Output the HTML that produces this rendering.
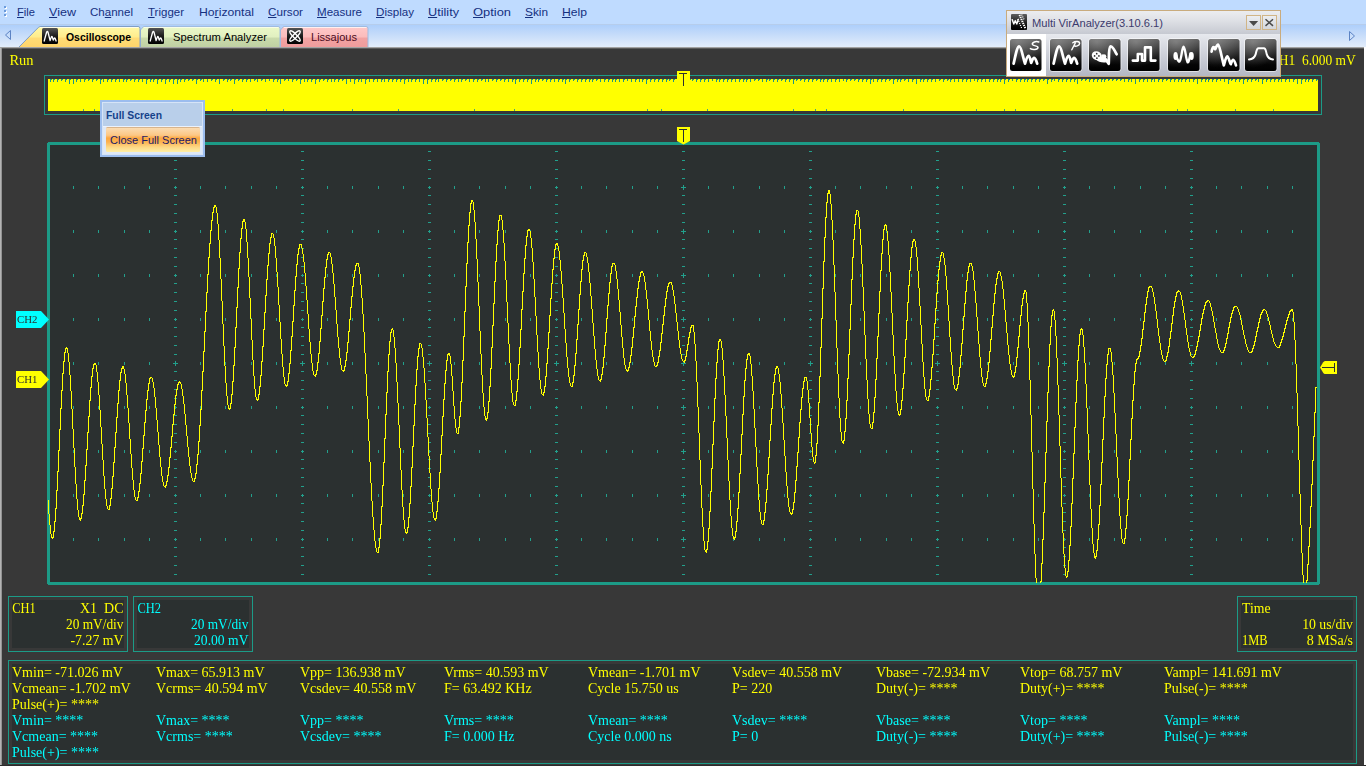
<!DOCTYPE html><html lang="en"><head><meta charset="utf-8"><title>Multi VirAnalyzer - Oscilloscope</title>
<style>

html,body{margin:0;padding:0}
body{width:1366px;height:768px;overflow:hidden;position:relative;background:#383838;font-family:"Liberation Sans",Arial,sans-serif;font-size:11.2px}
.abs{position:absolute}
#menubar{left:0;top:0;width:1366px;height:25px;background:#bfdbff;box-sizing:border-box;border-bottom:1px solid #b6cdec}
#menubar span{position:absolute;top:5px;color:#15307f;white-space:pre;line-height:15px;transform-origin:0 0}
#menubar u{text-decoration:underline;text-underline-offset:1px}
#grip{left:4px;top:6px;width:3px;height:11px}
#tabbar{left:0;top:25px;width:1366px;height:22px;background:linear-gradient(#aecffb,#c6dcfa 45%,#e3edfb)}
#work{left:0;top:47px;width:1366px;height:721px;background:#383838}
#edgeL{left:0;top:48px;width:2px;height:718px;background:linear-gradient(90deg,#b4b4b4 0 1px,#939393 1px)}
#edgeR{left:1364px;top:47px;width:2px;height:721px;background:#fff}
#edgeB{left:0;top:765px;width:1366px;height:3px;background:linear-gradient(#2c2c2c 0 1px,#fff 1px)}
#edgeT{left:0;top:47px;width:1366px;height:2px;background:linear-gradient(#a2a2a2 0 1px,#5c5c5c 1px)}
.tab{position:absolute;top:27px;height:20px;box-sizing:border-box}
.tab b,.tab i{position:absolute;top:3px;font-style:normal;white-space:pre;line-height:15px;transform-origin:0 0}
.ico16{position:absolute;top:1px;width:16px;height:16px}
.box{position:absolute;box-sizing:border-box;border:1px solid #1c9b87;background:#383838}
.box>div{position:absolute;left:3px;top:3px;right:3px;bottom:3px;background:#2b3030}
#popup{left:100px;top:100px;width:105px;height:57px;box-sizing:border-box;border:2px solid #9cbdee;background:#b9cfea;box-shadow:inset 0 0 0 1px #d6e4f7}
#popup b{position:absolute;left:3.5px;top:5.5px;color:#15428b;line-height:15px;white-space:pre;transform-origin:0 0}
#popsep{position:absolute;left:1px;right:1px;top:24px;height:1px;background:#ecf2fb}
#poplow{position:absolute;left:1px;right:1px;top:25px;bottom:1px;background:#dee8f6}
#popbtn{position:absolute;left:4px;top:25px;width:94px;height:25px;box-sizing:border-box;border-top:1px solid #d8b48c;border-radius:1.5px;background:linear-gradient(#fbdcb2,#fcc785 30%,#fda840 42%,#fdb14f 58%,#fdd885 80%,#feeea6)}
#popbtn span{position:absolute;left:3.5px;top:4.5px;color:#1c1a66;line-height:15px;white-space:pre;transform-origin:0 0}
#tool{left:1006px;top:10px;width:275px;height:67px;box-sizing:border-box;border:1px solid #c9ab7d;background:linear-gradient(#e9ebef,#cfd2da 22px,#e7e9ee 23px,#b3b7c3)}
#tooltitle{position:absolute;left:0;top:0;width:273px;height:23px;background:linear-gradient(#ecedf0,#dfe1e6 40%,#c6c9d1)}
#tooltitle span{position:absolute;left:25px;top:4.5px;color:#3b3a6c;line-height:15px;white-space:pre;transform-origin:0 0}
#sel{position:absolute;left:0;top:23px;width:39px;height:42px;background:#fff}
.tbtn{position:absolute;top:28px;width:32px;height:32px}
.cap{position:absolute;top:4px;width:15px;height:15px;box-sizing:border-box;border:1px solid #d1b587;background:linear-gradient(#eceef1,#d3d6dc)}

</style></head><body>
<div id="menubar" class="abs">
<span  style="transform:scaleX(0.9974);left:17px"><u>F</u>ile</span>
<span  style="transform:scaleX(1.1221);left:49px"><u>V</u>iew</span>
<span  style="transform:scaleX(1.0311);left:90px">Ch<u>a</u>nnel</span>
<span  style="transform:scaleX(1.0277);left:148px"><u>T</u>rigger</span>
<span  style="transform:scaleX(1.0915);left:199px">Ho<u>r</u>izontal</span>
<span  style="transform:scaleX(1.0419);left:268px"><u>C</u>ursor</span>
<span  style="transform:scaleX(1.0334);left:317px"><u>M</u>easure</span>
<span  style="transform:scaleX(1.0353);left:376px"><u>D</u>isplay</span>
<span  style="transform:scaleX(1.1324);left:428px"><u>U</u>tility</span>
<span  style="transform:scaleX(1.1526);left:473px"><u>O</u>ption</span>
<span  style="transform:scaleX(1.0560);left:525px"><u>S</u>kin</span>
<span  style="transform:scaleX(1.0855);left:562px"><u>H</u>elp</span>
</div><svg id="grip" class="abs" width="3" height="11" viewBox="0 0 3 11" shape-rendering="crispEdges"><path d="M1 1h2v2h-2zM1 5h2v2h-2zM1 9h2v2h-2z" fill="#fff"/><path d="M0 0h2v2h-2zM0 4h2v2h-2zM0 8h2v2h-2z" fill="#6b9bdc"/></svg>
<div id="tabbar" class="abs"></div>
<svg class="abs" style="left:0;top:25px" width="1366" height="22" viewBox="0 25 1366 22">
<defs><linearGradient id="gy" x1="0" y1="0" x2="0" y2="1"><stop offset="0" stop-color="#fff9a8"/><stop offset=".5" stop-color="#ffec8c"/><stop offset=".55" stop-color="#ffdc76"/><stop offset="1" stop-color="#ffd46a"/></linearGradient><linearGradient id="gg" x1="0" y1="0" x2="0" y2="1"><stop offset="0" stop-color="#ecf9c8"/><stop offset=".5" stop-color="#e1f0c0"/><stop offset=".55" stop-color="#cadbab"/><stop offset="1" stop-color="#bfd0a3"/></linearGradient><linearGradient id="gp" x1="0" y1="0" x2="0" y2="1"><stop offset="0" stop-color="#ffc9c9"/><stop offset=".5" stop-color="#fbbcbc"/><stop offset=".55" stop-color="#f2a3a3"/><stop offset="1" stop-color="#ef9c9c"/></linearGradient><linearGradient id="gk" x1="0" y1="0" x2="0" y2="1"><stop offset="0" stop-color="#555"/><stop offset=".5" stop-color="#1c1c1c"/><stop offset="1" stop-color="#000"/></linearGradient></defs>
<path d="M280.5 47.5V30l3-3.5H366q2 0 2 2V47.5z" fill="url(#gp)" stroke="#9fbbe0" stroke-width="1"/><path d="M284 27.5H366.5" stroke="#fff0f0" stroke-width="1" fill="none"/>
<path d="M140.5 47.5V30l3-3.5H278q2 0 2 2V47.5z" fill="url(#gg)" stroke="#9fbbe0" stroke-width="1"/><path d="M144 27.5H278.5" stroke="#f8fde8" stroke-width="1" fill="none"/>
<path d="M18.5 47.5L38.5 27.3q1-.8 2.5-.8H138q2 0 2 2V47.5z" fill="url(#gy)" stroke="#7f9ec6" stroke-width="1"/>
<path d="M40 27.5H138.5" stroke="#fffde8" stroke-width="1" fill="none"/>
<path d="M10.5 30.5v9l-5-4.5z" fill="none" stroke="#5c83c4" stroke-width="1"/>
<path d="M1349.5 31.5v9l5-4.5z" fill="none" stroke="#5c83c4" stroke-width="1"/>
<rect x="42" y="28" width="16" height="16" rx="1.5" fill="url(#gk)"/>
<path d="M44.2 41l2.3-8.5q.9-2 1.6 0l2 8 1.3-3.6q.5-1 .9 0l.9 3.2 1-1.9q.5-.8 .9 0l1 2.8" fill="none" stroke="#fff" stroke-width="1.3" stroke-linecap="round" stroke-linejoin="round"/>
<rect x="148" y="28" width="16" height="16" rx="1.5" fill="url(#gk)"/>
<path d="M150.2 41l2.3-8.5q.9-2 1.6 0l2 8 1.3-3.6q.5-1 .9 0l.9 3.2 1-1.9q.5-.8 .9 0l1 2.8" fill="none" stroke="#fff" stroke-width="1.3" stroke-linecap="round" stroke-linejoin="round"/>
<rect x="287" y="28" width="16" height="16" rx="1.5" fill="url(#gk)"/>
<g fill="none" stroke="#fff" stroke-width="1.5"><ellipse cx="295" cy="36" rx="7" ry="1.9" transform="rotate(45 295 36)"/><ellipse cx="295" cy="36" rx="7" ry="1.9" transform="rotate(-45 295 36)"/></g>
</svg>
<div class="abs" style="left:0;top:25px;width:1366px;height:22px">
<b class="abs" style="transform:scaleX(0.9334);left:66px;top:5px;color:#000;line-height:15px;white-space:pre;transform-origin:0 0">Oscilloscope</b>
<span class="abs" style="transform:scaleX(1.0010);left:173px;top:5px;color:#000;line-height:15px;white-space:pre;transform-origin:0 0">Spectrum Analyzer</span>
<span class="abs" style="transform:scaleX(0.9863);left:311px;top:5px;color:#4a0a1c;line-height:15px;white-space:pre;transform-origin:0 0">Lissajous</span>
</div>
<div id="work" class="abs"></div><div id="edgeT" class="abs"></div>
<div class="box" style="left:8px;top:596px;width:120px;height:56px"><div></div></div>
<div class="box" style="left:133px;top:596px;width:120px;height:56px"><div></div></div>
<div class="box" style="left:1237px;top:596px;width:120px;height:56px"><div></div></div>
<div class="box" style="left:8px;top:660px;width:1349px;height:104px"><div></div></div>
<svg class="abs" style="left:0;top:47px;will-change:transform" width="1366" height="721" viewBox="0 47 1366 721" shape-rendering="crispEdges">
<rect x="44.5" y="75.5" width="1277" height="39" fill="#363839" stroke="#1c9b87" stroke-width="1"/>
<rect x="48" y="79" width="1270" height="32" fill="#ffff00"/>
<path d="M50.5 79v3M51.5 79v1M53.5 79v3M54.5 79v1M57.5 79v3M58.5 79v1M61.5 79v2M62.5 79v1M65.5 79v3M66.5 79v1M69.5 79v5M70.5 79v1M73.5 79v5M76.5 79v3M77.5 79v1M80.5 79v3M84.5 79v3M85.5 79v1M88.5 79v2M89.5 79v1M92.5 79v3M93.5 79v1M96.5 79v2M97.5 79v1M100.5 79v5M101.5 79v1M103.5 79v3M107.5 79v3M108.5 79v1M111.5 79v3M112.5 79v1M115.5 79v3M116.5 79v1M119.5 79v3M123.5 79v3M124.5 79v1M126.5 79v3M127.5 79v1M130.5 79v2M131.5 79v1M134.5 79v3M135.5 79v1M138.5 79v3M139.5 79v1M142.5 79v3M146.5 79v5M147.5 79v1M150.5 79v3M151.5 79v1M153.5 79v3M154.5 79v1M157.5 79v5M158.5 79v1M161.5 79v3M162.5 79v1M165.5 79v5M166.5 79v1M169.5 79v3M170.5 79v1M173.5 79v5M174.5 79v1M177.5 79v5M178.5 79v1M180.5 79v3M181.5 79v1M184.5 79v3M185.5 79v1M188.5 79v2M189.5 79v1M192.5 79v2M193.5 79v1M196.5 79v5M197.5 79v1M200.5 79v2M201.5 79v1M203.5 79v3M207.5 79v3M211.5 79v2M212.5 79v1M215.5 79v3M216.5 79v1M219.5 79v5M223.5 79v2M224.5 79v1M227.5 79v3M228.5 79v1M230.5 79v2M231.5 79v1M234.5 79v5M235.5 79v1M238.5 79v2M239.5 79v1M242.5 79v3M243.5 79v1M246.5 79v3M247.5 79v1M250.5 79v3M254.5 79v2M255.5 79v1M257.5 79v3M261.5 79v2M262.5 79v1M265.5 79v3M269.5 79v2M273.5 79v3M274.5 79v1M277.5 79v3M278.5 79v1M280.5 79v5M284.5 79v2M285.5 79v1M288.5 79v2M292.5 79v3M293.5 79v1M296.5 79v2M297.5 79v1M300.5 79v5M301.5 79v1M304.5 79v3M307.5 79v3M308.5 79v1M311.5 79v3M312.5 79v1M315.5 79v5M316.5 79v1M319.5 79v3M320.5 79v1M323.5 79v2M324.5 79v1M327.5 79v3M328.5 79v1M331.5 79v3M334.5 79v3M335.5 79v1M338.5 79v3M339.5 79v1M342.5 79v2M343.5 79v1M346.5 79v5M350.5 79v3M354.5 79v5M355.5 79v1M358.5 79v3M359.5 79v1M361.5 79v3M365.5 79v5M366.5 79v1M369.5 79v3M373.5 79v3M374.5 79v1M377.5 79v3M381.5 79v3M382.5 79v1M384.5 79v3M388.5 79v3M389.5 79v1M392.5 79v3M393.5 79v1M396.5 79v3M397.5 79v1M400.5 79v3M401.5 79v1M404.5 79v5M405.5 79v1M408.5 79v3M411.5 79v3M412.5 79v1M415.5 79v3M416.5 79v1M419.5 79v3M423.5 79v5M424.5 79v1M427.5 79v5M428.5 79v1M431.5 79v3M432.5 79v1M435.5 79v3M436.5 79v1M438.5 79v3M442.5 79v2M443.5 79v1M446.5 79v3M447.5 79v1M450.5 79v2M451.5 79v1M454.5 79v3M455.5 79v1M458.5 79v3M461.5 79v3M462.5 79v1M465.5 79v2M466.5 79v1M469.5 79v3M473.5 79v3M474.5 79v1M477.5 79v3M478.5 79v1M481.5 79v2M482.5 79v1M485.5 79v3M488.5 79v3M492.5 79v2M493.5 79v1M496.5 79v3M497.5 79v1M500.5 79v2M501.5 79v1M504.5 79v3M505.5 79v1M508.5 79v3M512.5 79v3M513.5 79v1M515.5 79v5M516.5 79v1M519.5 79v3M520.5 79v1M523.5 79v3M524.5 79v1M527.5 79v3M528.5 79v1M531.5 79v5M532.5 79v1M535.5 79v3M536.5 79v1M538.5 79v3M539.5 79v1M542.5 79v2M543.5 79v1M546.5 79v3M547.5 79v1M550.5 79v3M551.5 79v1M554.5 79v3M558.5 79v3M559.5 79v1M562.5 79v3M563.5 79v1M565.5 79v5M566.5 79v1M569.5 79v3M570.5 79v1M573.5 79v2M574.5 79v1M577.5 79v3M578.5 79v1M581.5 79v3M582.5 79v1M585.5 79v3M586.5 79v1M589.5 79v3M590.5 79v1M592.5 79v3M593.5 79v1M596.5 79v2M597.5 79v1M600.5 79v3M604.5 79v3M605.5 79v1M608.5 79v3M609.5 79v1M612.5 79v3M613.5 79v1M615.5 79v3M616.5 79v1M619.5 79v3M623.5 79v3M624.5 79v1M627.5 79v2M631.5 79v3M635.5 79v3M636.5 79v1M639.5 79v3M642.5 79v3M643.5 79v1M646.5 79v5M647.5 79v1M650.5 79v3M651.5 79v1M654.5 79v3M655.5 79v1M658.5 79v3M659.5 79v1M662.5 79v3M663.5 79v1M666.5 79v3M667.5 79v1M669.5 79v2M670.5 79v1M673.5 79v3M674.5 79v1M677.5 79v3M678.5 79v1M681.5 79v3M682.5 79v1M685.5 79v3M686.5 79v1M689.5 79v2M690.5 79v1M692.5 79v2M693.5 79v1M696.5 79v3M697.5 79v1M700.5 79v3M701.5 79v1M704.5 79v3M705.5 79v1M708.5 79v3M712.5 79v2M716.5 79v3M717.5 79v1M719.5 79v3M720.5 79v1M723.5 79v3M724.5 79v1M727.5 79v3M728.5 79v1M731.5 79v3M732.5 79v1M735.5 79v3M739.5 79v3M740.5 79v1M743.5 79v3M744.5 79v1M746.5 79v3M747.5 79v1M750.5 79v3M754.5 79v2M755.5 79v1M758.5 79v2M759.5 79v1M762.5 79v3M766.5 79v3M767.5 79v1M769.5 79v2M770.5 79v1M773.5 79v3M774.5 79v1M777.5 79v3M778.5 79v1M781.5 79v2M782.5 79v1M785.5 79v3M786.5 79v1M789.5 79v3M790.5 79v1M793.5 79v5M794.5 79v1M796.5 79v2M797.5 79v1M800.5 79v2M801.5 79v1M804.5 79v3M805.5 79v1M808.5 79v3M809.5 79v1M812.5 79v3M813.5 79v1M816.5 79v2M817.5 79v1M820.5 79v3M821.5 79v1M823.5 79v3M824.5 79v1M827.5 79v3M828.5 79v1M831.5 79v3M835.5 79v3M836.5 79v1M839.5 79v3M843.5 79v2M846.5 79v3M847.5 79v1M850.5 79v2M851.5 79v1M854.5 79v2M855.5 79v1M858.5 79v3M859.5 79v1M862.5 79v3M863.5 79v1M866.5 79v3M867.5 79v1M870.5 79v5M871.5 79v1M873.5 79v3M877.5 79v3M878.5 79v1M881.5 79v3M882.5 79v1M885.5 79v3M886.5 79v1M889.5 79v2M890.5 79v1M893.5 79v5M894.5 79v1M897.5 79v3M898.5 79v1M900.5 79v3M901.5 79v1M904.5 79v2M905.5 79v1M908.5 79v3M912.5 79v3M913.5 79v1M916.5 79v5M920.5 79v3M921.5 79v1M923.5 79v3M924.5 79v1M927.5 79v3M928.5 79v1M931.5 79v3M932.5 79v1M935.5 79v3M939.5 79v2M940.5 79v1M943.5 79v3M944.5 79v1M947.5 79v2M948.5 79v1M950.5 79v3M951.5 79v1M954.5 79v3M958.5 79v3M962.5 79v3M963.5 79v1M966.5 79v3M967.5 79v1M970.5 79v3M974.5 79v2M977.5 79v3M978.5 79v1M981.5 79v3M982.5 79v1M985.5 79v3M989.5 79v3M990.5 79v1M993.5 79v3M994.5 79v1M997.5 79v3M998.5 79v1M1000.5 79v3M1001.5 79v1M1004.5 79v5M1005.5 79v1M1008.5 79v3M1009.5 79v1M1012.5 79v2M1016.5 79v3M1017.5 79v1M1020.5 79v3M1021.5 79v1M1024.5 79v3M1025.5 79v1M1027.5 79v3M1028.5 79v1M1031.5 79v3M1032.5 79v1M1035.5 79v3M1036.5 79v1M1039.5 79v3M1040.5 79v1M1043.5 79v2M1044.5 79v1M1047.5 79v5M1048.5 79v1M1051.5 79v3M1052.5 79v1M1054.5 79v2M1058.5 79v3M1059.5 79v1M1062.5 79v3M1063.5 79v1M1066.5 79v3M1067.5 79v1M1070.5 79v3M1071.5 79v1M1074.5 79v3M1075.5 79v1M1077.5 79v5M1081.5 79v2M1082.5 79v1M1085.5 79v2M1086.5 79v1M1089.5 79v3M1090.5 79v1M1093.5 79v3M1094.5 79v1M1097.5 79v3M1098.5 79v1M1101.5 79v3M1102.5 79v1M1104.5 79v3M1105.5 79v1M1108.5 79v2M1109.5 79v1M1112.5 79v2M1113.5 79v1M1116.5 79v2M1117.5 79v1M1120.5 79v2M1121.5 79v1M1124.5 79v3M1128.5 79v3M1129.5 79v1M1131.5 79v3M1135.5 79v5M1139.5 79v3M1140.5 79v1M1143.5 79v3M1144.5 79v1M1147.5 79v3M1151.5 79v3M1152.5 79v1M1154.5 79v3M1158.5 79v3M1159.5 79v1M1162.5 79v3M1163.5 79v1M1166.5 79v2M1167.5 79v1M1170.5 79v3M1171.5 79v1M1174.5 79v3M1175.5 79v1M1178.5 79v3M1179.5 79v1M1181.5 79v3M1182.5 79v1M1185.5 79v3M1186.5 79v1M1189.5 79v3M1193.5 79v3M1194.5 79v1M1197.5 79v5M1201.5 79v3M1202.5 79v1M1205.5 79v3M1206.5 79v1M1208.5 79v3M1209.5 79v1M1212.5 79v3M1213.5 79v1M1216.5 79v3M1217.5 79v1M1220.5 79v2M1224.5 79v3M1228.5 79v5M1229.5 79v1M1231.5 79v2M1232.5 79v1M1235.5 79v3M1236.5 79v1M1239.5 79v3M1240.5 79v1M1243.5 79v5M1244.5 79v1M1247.5 79v3M1248.5 79v1M1251.5 79v3M1252.5 79v1M1255.5 79v2M1256.5 79v1M1258.5 79v3M1262.5 79v5M1263.5 79v1M1266.5 79v3M1267.5 79v1M1270.5 79v3M1271.5 79v1M1274.5 79v3M1275.5 79v1M1278.5 79v3M1279.5 79v1M1281.5 79v3M1285.5 79v3M1286.5 79v1M1289.5 79v3M1293.5 79v3M1294.5 79v1M1297.5 79v5M1301.5 79v5M1302.5 79v1M1305.5 79v3M1306.5 79v1M1308.5 79v3M1309.5 79v1M1312.5 79v3M1313.5 79v1M1316.5 79v2M1317.5 79v1" stroke="#1f9484" stroke-width="1" fill="none"/>
<path d="M83.5 109v2M94.5 109v2M232.5 109v2M266.5 109v2M283.5 109v2M352.5 109v2M398.5 109v2M474.5 109v2M514.5 109v2M647.5 109v2M661.5 109v2M707.5 109v2M793.5 109v2M815.5 109v2M826.5 109v2M903.5 109v2M976.5 109v2M1004.5 109v2M1015.5 109v2M1102.5 109v2M1177.5 109v2M1187.5 109v2M1235.5 109v2M1273.5 109v2" stroke="#45a37c" stroke-width="1" fill="none"/>
<rect x="677" y="71" width="13" height="12" fill="#ffff00"/>
<path d="M679 73.5h8M683.5 73v13" stroke="#2b3030" stroke-width="1" fill="none"/>
<rect x="48.5" y="143.5" width="1270" height="440" rx="1.5" fill="#2b3030" stroke="#1c9b87" stroke-width="3"/>
<path d="M174 151.5h3M174 160.5h3M174 169.5h3M174 178.5h3M174 187.5h3M175.5 186v3M174 195.5h3M174 204.5h3M174 213.5h3M174 222.5h3M174 231.5h3M175.5 230v3M174 239.5h3M174 248.5h3M174 257.5h3M174 266.5h3M174 275.5h3M175.5 274v3M174 283.5h3M174 292.5h3M174 301.5h3M174 310.5h3M174 319.5h3M175.5 318v3M174 327.5h3M174 336.5h3M174 345.5h3M174 354.5h3M173 363.5h5M175.5 361v5M174 371.5h3M174 380.5h3M174 389.5h3M174 398.5h3M174 407.5h3M175.5 406v3M174 415.5h3M174 424.5h3M174 433.5h3M174 442.5h3M174 451.5h3M175.5 450v3M174 459.5h3M174 468.5h3M174 477.5h3M174 486.5h3M174 495.5h3M175.5 494v3M174 503.5h3M174 512.5h3M174 521.5h3M174 530.5h3M174 539.5h3M175.5 538v3M174 547.5h3M174 556.5h3M174 565.5h3M174 574.5h3M301 151.5h3M301 160.5h3M301 169.5h3M301 178.5h3M301 187.5h3M302.5 186v3M301 195.5h3M301 204.5h3M301 213.5h3M301 222.5h3M301 231.5h3M302.5 230v3M301 239.5h3M301 248.5h3M301 257.5h3M301 266.5h3M301 275.5h3M302.5 274v3M301 283.5h3M301 292.5h3M301 301.5h3M301 310.5h3M301 319.5h3M302.5 318v3M301 327.5h3M301 336.5h3M301 345.5h3M301 354.5h3M300 363.5h5M302.5 361v5M301 371.5h3M301 380.5h3M301 389.5h3M301 398.5h3M301 407.5h3M302.5 406v3M301 415.5h3M301 424.5h3M301 433.5h3M301 442.5h3M301 451.5h3M302.5 450v3M301 459.5h3M301 468.5h3M301 477.5h3M301 486.5h3M301 495.5h3M302.5 494v3M301 503.5h3M301 512.5h3M301 521.5h3M301 530.5h3M301 539.5h3M302.5 538v3M301 547.5h3M301 556.5h3M301 565.5h3M301 574.5h3M428 151.5h3M428 160.5h3M428 169.5h3M428 178.5h3M428 187.5h3M429.5 186v3M428 195.5h3M428 204.5h3M428 213.5h3M428 222.5h3M428 231.5h3M429.5 230v3M428 239.5h3M428 248.5h3M428 257.5h3M428 266.5h3M428 275.5h3M429.5 274v3M428 283.5h3M428 292.5h3M428 301.5h3M428 310.5h3M428 319.5h3M429.5 318v3M428 327.5h3M428 336.5h3M428 345.5h3M428 354.5h3M427 363.5h5M429.5 361v5M428 371.5h3M428 380.5h3M428 389.5h3M428 398.5h3M428 407.5h3M429.5 406v3M428 415.5h3M428 424.5h3M428 433.5h3M428 442.5h3M428 451.5h3M429.5 450v3M428 459.5h3M428 468.5h3M428 477.5h3M428 486.5h3M428 495.5h3M429.5 494v3M428 503.5h3M428 512.5h3M428 521.5h3M428 530.5h3M428 539.5h3M429.5 538v3M428 547.5h3M428 556.5h3M428 565.5h3M428 574.5h3M555 151.5h3M555 160.5h3M555 169.5h3M555 178.5h3M555 187.5h3M556.5 186v3M555 195.5h3M555 204.5h3M555 213.5h3M555 222.5h3M555 231.5h3M556.5 230v3M555 239.5h3M555 248.5h3M555 257.5h3M555 266.5h3M555 275.5h3M556.5 274v3M555 283.5h3M555 292.5h3M555 301.5h3M555 310.5h3M555 319.5h3M556.5 318v3M555 327.5h3M555 336.5h3M555 345.5h3M555 354.5h3M554 363.5h5M556.5 361v5M555 371.5h3M555 380.5h3M555 389.5h3M555 398.5h3M555 407.5h3M556.5 406v3M555 415.5h3M555 424.5h3M555 433.5h3M555 442.5h3M555 451.5h3M556.5 450v3M555 459.5h3M555 468.5h3M555 477.5h3M555 486.5h3M555 495.5h3M556.5 494v3M555 503.5h3M555 512.5h3M555 521.5h3M555 530.5h3M555 539.5h3M556.5 538v3M555 547.5h3M555 556.5h3M555 565.5h3M555 574.5h3M682 151.5h3M682 160.5h3M682 169.5h3M682 178.5h3M681 187.5h5M683.5 185v5M682 195.5h3M682 204.5h3M682 213.5h3M682 222.5h3M681 231.5h5M683.5 229v5M682 239.5h3M682 248.5h3M682 257.5h3M682 266.5h3M681 275.5h5M683.5 273v5M682 283.5h3M682 292.5h3M682 301.5h3M682 310.5h3M681 319.5h5M683.5 317v5M682 327.5h3M682 336.5h3M682 345.5h3M682 354.5h3M681 363.5h5M683.5 361v5M682 371.5h3M682 380.5h3M682 389.5h3M682 398.5h3M681 407.5h5M683.5 405v5M682 415.5h3M682 424.5h3M682 433.5h3M682 442.5h3M681 451.5h5M683.5 449v5M682 459.5h3M682 468.5h3M682 477.5h3M682 486.5h3M681 495.5h5M683.5 493v5M682 503.5h3M682 512.5h3M682 521.5h3M682 530.5h3M681 539.5h5M683.5 537v5M682 547.5h3M682 556.5h3M682 565.5h3M682 574.5h3M809 151.5h3M809 160.5h3M809 169.5h3M809 178.5h3M809 187.5h3M810.5 186v3M809 195.5h3M809 204.5h3M809 213.5h3M809 222.5h3M809 231.5h3M810.5 230v3M809 239.5h3M809 248.5h3M809 257.5h3M809 266.5h3M809 275.5h3M810.5 274v3M809 283.5h3M809 292.5h3M809 301.5h3M809 310.5h3M809 319.5h3M810.5 318v3M809 327.5h3M809 336.5h3M809 345.5h3M809 354.5h3M808 363.5h5M810.5 361v5M809 371.5h3M809 380.5h3M809 389.5h3M809 398.5h3M809 407.5h3M810.5 406v3M809 415.5h3M809 424.5h3M809 433.5h3M809 442.5h3M809 451.5h3M810.5 450v3M809 459.5h3M809 468.5h3M809 477.5h3M809 486.5h3M809 495.5h3M810.5 494v3M809 503.5h3M809 512.5h3M809 521.5h3M809 530.5h3M809 539.5h3M810.5 538v3M809 547.5h3M809 556.5h3M809 565.5h3M809 574.5h3M936 151.5h3M936 160.5h3M936 169.5h3M936 178.5h3M936 187.5h3M937.5 186v3M936 195.5h3M936 204.5h3M936 213.5h3M936 222.5h3M936 231.5h3M937.5 230v3M936 239.5h3M936 248.5h3M936 257.5h3M936 266.5h3M936 275.5h3M937.5 274v3M936 283.5h3M936 292.5h3M936 301.5h3M936 310.5h3M936 319.5h3M937.5 318v3M936 327.5h3M936 336.5h3M936 345.5h3M936 354.5h3M935 363.5h5M937.5 361v5M936 371.5h3M936 380.5h3M936 389.5h3M936 398.5h3M936 407.5h3M937.5 406v3M936 415.5h3M936 424.5h3M936 433.5h3M936 442.5h3M936 451.5h3M937.5 450v3M936 459.5h3M936 468.5h3M936 477.5h3M936 486.5h3M936 495.5h3M937.5 494v3M936 503.5h3M936 512.5h3M936 521.5h3M936 530.5h3M936 539.5h3M937.5 538v3M936 547.5h3M936 556.5h3M936 565.5h3M936 574.5h3M1063 151.5h3M1063 160.5h3M1063 169.5h3M1063 178.5h3M1063 187.5h3M1064.5 186v3M1063 195.5h3M1063 204.5h3M1063 213.5h3M1063 222.5h3M1063 231.5h3M1064.5 230v3M1063 239.5h3M1063 248.5h3M1063 257.5h3M1063 266.5h3M1063 275.5h3M1064.5 274v3M1063 283.5h3M1063 292.5h3M1063 301.5h3M1063 310.5h3M1063 319.5h3M1064.5 318v3M1063 327.5h3M1063 336.5h3M1063 345.5h3M1063 354.5h3M1062 363.5h5M1064.5 361v5M1063 371.5h3M1063 380.5h3M1063 389.5h3M1063 398.5h3M1063 407.5h3M1064.5 406v3M1063 415.5h3M1063 424.5h3M1063 433.5h3M1063 442.5h3M1063 451.5h3M1064.5 450v3M1063 459.5h3M1063 468.5h3M1063 477.5h3M1063 486.5h3M1063 495.5h3M1064.5 494v3M1063 503.5h3M1063 512.5h3M1063 521.5h3M1063 530.5h3M1063 539.5h3M1064.5 538v3M1063 547.5h3M1063 556.5h3M1063 565.5h3M1063 574.5h3M1190 151.5h3M1190 160.5h3M1190 169.5h3M1190 178.5h3M1190 187.5h3M1191.5 186v3M1190 195.5h3M1190 204.5h3M1190 213.5h3M1190 222.5h3M1190 231.5h3M1191.5 230v3M1190 239.5h3M1190 248.5h3M1190 257.5h3M1190 266.5h3M1190 275.5h3M1191.5 274v3M1190 283.5h3M1190 292.5h3M1190 301.5h3M1190 310.5h3M1190 319.5h3M1191.5 318v3M1190 327.5h3M1190 336.5h3M1190 345.5h3M1190 354.5h3M1189 363.5h5M1191.5 361v5M1190 371.5h3M1190 380.5h3M1190 389.5h3M1190 398.5h3M1190 407.5h3M1191.5 406v3M1190 415.5h3M1190 424.5h3M1190 433.5h3M1190 442.5h3M1190 451.5h3M1191.5 450v3M1190 459.5h3M1190 468.5h3M1190 477.5h3M1190 486.5h3M1190 495.5h3M1191.5 494v3M1190 503.5h3M1190 512.5h3M1190 521.5h3M1190 530.5h3M1190 539.5h3M1191.5 538v3M1190 547.5h3M1190 556.5h3M1190 565.5h3M1190 574.5h3M73.5 186v3M98.5 186v3M124.5 186v3M149.5 186v3M200.5 186v3M225.5 186v3M251.5 186v3M276.5 186v3M327.5 186v3M352.5 186v3M378.5 186v3M403.5 186v3M454.5 186v3M479.5 186v3M505.5 186v3M530.5 186v3M581.5 186v3M606.5 186v3M632.5 186v3M657.5 186v3M708.5 186v3M733.5 186v3M759.5 186v3M784.5 186v3M835.5 186v3M860.5 186v3M886.5 186v3M911.5 186v3M962.5 186v3M987.5 186v3M1013.5 186v3M1038.5 186v3M1089.5 186v3M1114.5 186v3M1140.5 186v3M1165.5 186v3M1216.5 186v3M1241.5 186v3M1267.5 186v3M1292.5 186v3M73.5 230v3M98.5 230v3M124.5 230v3M149.5 230v3M200.5 230v3M225.5 230v3M251.5 230v3M276.5 230v3M327.5 230v3M352.5 230v3M378.5 230v3M403.5 230v3M454.5 230v3M479.5 230v3M505.5 230v3M530.5 230v3M581.5 230v3M606.5 230v3M632.5 230v3M657.5 230v3M708.5 230v3M733.5 230v3M759.5 230v3M784.5 230v3M835.5 230v3M860.5 230v3M886.5 230v3M911.5 230v3M962.5 230v3M987.5 230v3M1013.5 230v3M1038.5 230v3M1089.5 230v3M1114.5 230v3M1140.5 230v3M1165.5 230v3M1216.5 230v3M1241.5 230v3M1267.5 230v3M1292.5 230v3M73.5 274v3M98.5 274v3M124.5 274v3M149.5 274v3M200.5 274v3M225.5 274v3M251.5 274v3M276.5 274v3M327.5 274v3M352.5 274v3M378.5 274v3M403.5 274v3M454.5 274v3M479.5 274v3M505.5 274v3M530.5 274v3M581.5 274v3M606.5 274v3M632.5 274v3M657.5 274v3M708.5 274v3M733.5 274v3M759.5 274v3M784.5 274v3M835.5 274v3M860.5 274v3M886.5 274v3M911.5 274v3M962.5 274v3M987.5 274v3M1013.5 274v3M1038.5 274v3M1089.5 274v3M1114.5 274v3M1140.5 274v3M1165.5 274v3M1216.5 274v3M1241.5 274v3M1267.5 274v3M1292.5 274v3M73.5 318v3M98.5 318v3M124.5 318v3M149.5 318v3M200.5 318v3M225.5 318v3M251.5 318v3M276.5 318v3M327.5 318v3M352.5 318v3M378.5 318v3M403.5 318v3M454.5 318v3M479.5 318v3M505.5 318v3M530.5 318v3M581.5 318v3M606.5 318v3M632.5 318v3M657.5 318v3M708.5 318v3M733.5 318v3M759.5 318v3M784.5 318v3M835.5 318v3M860.5 318v3M886.5 318v3M911.5 318v3M962.5 318v3M987.5 318v3M1013.5 318v3M1038.5 318v3M1089.5 318v3M1114.5 318v3M1140.5 318v3M1165.5 318v3M1216.5 318v3M1241.5 318v3M1267.5 318v3M1292.5 318v3M73.5 362v3M98.5 362v3M124.5 362v3M149.5 362v3M200.5 362v3M225.5 362v3M251.5 362v3M276.5 362v3M327.5 362v3M352.5 362v3M378.5 362v3M403.5 362v3M454.5 362v3M479.5 362v3M505.5 362v3M530.5 362v3M581.5 362v3M606.5 362v3M632.5 362v3M657.5 362v3M708.5 362v3M733.5 362v3M759.5 362v3M784.5 362v3M835.5 362v3M860.5 362v3M886.5 362v3M911.5 362v3M962.5 362v3M987.5 362v3M1013.5 362v3M1038.5 362v3M1089.5 362v3M1114.5 362v3M1140.5 362v3M1165.5 362v3M1216.5 362v3M1241.5 362v3M1267.5 362v3M1292.5 362v3M73.5 406v3M98.5 406v3M124.5 406v3M149.5 406v3M200.5 406v3M225.5 406v3M251.5 406v3M276.5 406v3M327.5 406v3M352.5 406v3M378.5 406v3M403.5 406v3M454.5 406v3M479.5 406v3M505.5 406v3M530.5 406v3M581.5 406v3M606.5 406v3M632.5 406v3M657.5 406v3M708.5 406v3M733.5 406v3M759.5 406v3M784.5 406v3M835.5 406v3M860.5 406v3M886.5 406v3M911.5 406v3M962.5 406v3M987.5 406v3M1013.5 406v3M1038.5 406v3M1089.5 406v3M1114.5 406v3M1140.5 406v3M1165.5 406v3M1216.5 406v3M1241.5 406v3M1267.5 406v3M1292.5 406v3M73.5 450v3M98.5 450v3M124.5 450v3M149.5 450v3M200.5 450v3M225.5 450v3M251.5 450v3M276.5 450v3M327.5 450v3M352.5 450v3M378.5 450v3M403.5 450v3M454.5 450v3M479.5 450v3M505.5 450v3M530.5 450v3M581.5 450v3M606.5 450v3M632.5 450v3M657.5 450v3M708.5 450v3M733.5 450v3M759.5 450v3M784.5 450v3M835.5 450v3M860.5 450v3M886.5 450v3M911.5 450v3M962.5 450v3M987.5 450v3M1013.5 450v3M1038.5 450v3M1089.5 450v3M1114.5 450v3M1140.5 450v3M1165.5 450v3M1216.5 450v3M1241.5 450v3M1267.5 450v3M1292.5 450v3M73.5 494v3M98.5 494v3M124.5 494v3M149.5 494v3M200.5 494v3M225.5 494v3M251.5 494v3M276.5 494v3M327.5 494v3M352.5 494v3M378.5 494v3M403.5 494v3M454.5 494v3M479.5 494v3M505.5 494v3M530.5 494v3M581.5 494v3M606.5 494v3M632.5 494v3M657.5 494v3M708.5 494v3M733.5 494v3M759.5 494v3M784.5 494v3M835.5 494v3M860.5 494v3M886.5 494v3M911.5 494v3M962.5 494v3M987.5 494v3M1013.5 494v3M1038.5 494v3M1089.5 494v3M1114.5 494v3M1140.5 494v3M1165.5 494v3M1216.5 494v3M1241.5 494v3M1267.5 494v3M1292.5 494v3M73.5 538v3M98.5 538v3M124.5 538v3M149.5 538v3M200.5 538v3M225.5 538v3M251.5 538v3M276.5 538v3M327.5 538v3M352.5 538v3M378.5 538v3M403.5 538v3M454.5 538v3M479.5 538v3M505.5 538v3M530.5 538v3M581.5 538v3M606.5 538v3M632.5 538v3M657.5 538v3M708.5 538v3M733.5 538v3M759.5 538v3M784.5 538v3M835.5 538v3M860.5 538v3M886.5 538v3M911.5 538v3M962.5 538v3M987.5 538v3M1013.5 538v3M1038.5 538v3M1089.5 538v3M1114.5 538v3M1140.5 538v3M1165.5 538v3M1216.5 538v3M1241.5 538v3M1267.5 538v3M1292.5 538v3" stroke="#22a08c" stroke-width="1" fill="none"/>
<path d="M48.5 500V514M49.5 514V525M50.5 525V534M51.5 534V538M52.5 537V539M53.5 531V538M54.5 521V532M55.5 508V522M56.5 490V509M57.5 471V491M58.5 450V472M59.5 429V451M60.5 408V430M61.5 390V409M62.5 373V391M63.5 361V374M64.5 352V362M65.5 348V353M66.5 347V349M67.5 348V353M68.5 353V362M69.5 362V375M70.5 375V391M71.5 391V409M72.5 409V429M73.5 429V448M74.5 448V467M75.5 467V484M76.5 484V499M77.5 499V510M78.5 510V517M79.5 517V520M80.5 518V521M81.5 513V519M82.5 505V514M83.5 494V506M84.5 480V495M85.5 465V481M86.5 449V466M87.5 432V450M88.5 416V433M89.5 400V417M90.5 387V401M91.5 376V388M92.5 368V377M93.5 364V369M94.5 363V365M95.5 363V365M96.5 365V372M97.5 372V382M98.5 382V395M99.5 395V410M100.5 410V427M101.5 427V444M102.5 444V460M103.5 460V476M104.5 476V489M105.5 489V499M106.5 499V506M107.5 506V509M108.5 509V510M109.5 505V510M110.5 498V506M111.5 488V499M112.5 476V489M113.5 462V477M114.5 447V463M115.5 432V448M116.5 417V433M117.5 403V418M118.5 390V404M119.5 380V391M120.5 372V381M121.5 368V373M122.5 366V369M123.5 366V369M124.5 369V374M125.5 374V383M126.5 383V395M127.5 395V408M128.5 408V423M129.5 423V439M130.5 439V454M131.5 454V468M132.5 468V480M133.5 480V490M134.5 490V497M135.5 497V500M136.5 500V501M137.5 497V501M138.5 491V498M139.5 483V492M140.5 473V484M141.5 461V474M142.5 448V462M143.5 435V449M144.5 422V436M145.5 410V423M146.5 399V411M147.5 390V400M148.5 383V391M149.5 378V384M150.5 377V379M151.5 377V378M152.5 378V382M153.5 382V388M154.5 388V397M155.5 397V408M156.5 408V420M157.5 420V432M158.5 432V445M159.5 445V457M160.5 457V467M161.5 467V476M162.5 476V482M163.5 482V486M164.5 486V487M165.5 485V488M166.5 481V486M167.5 475V482M168.5 467V476M169.5 457V468M170.5 447V458M171.5 436V448M172.5 424V437M173.5 414V425M174.5 404V415M175.5 395V405M176.5 389V396M177.5 384V390M178.5 382V385M179.5 381V383M180.5 382V384M181.5 384V389M182.5 389V396M183.5 396V404M184.5 404V414M185.5 414V425M186.5 425V436M187.5 436V447M188.5 447V457M189.5 457V466M190.5 466V473M191.5 473V478M192.5 478V481M193.5 481V482M194.5 478V482M195.5 473V479M196.5 464V474M197.5 454V465M198.5 441V455M199.5 425V442M200.5 409V426M201.5 390V410M202.5 371V391M203.5 351V372M204.5 331V352M205.5 311V332M206.5 292V312M207.5 274V293M208.5 257V275M209.5 243V258M210.5 230V244M211.5 220V231M212.5 212V221M213.5 207V213M214.5 205V208M215.5 205V207M216.5 207V213M217.5 213V224M218.5 224V240M219.5 240V258M220.5 258V279M221.5 279V301M222.5 301V324M223.5 324V346M224.5 346V366M225.5 366V383M226.5 383V396M227.5 396V405M228.5 405V409M229.5 408V410M230.5 403V409M231.5 394V404M232.5 381V395M233.5 365V382M234.5 347V366M235.5 327V348M236.5 307V328M237.5 287V308M238.5 268V288M239.5 252V269M240.5 238V253M241.5 228V239M242.5 221V229M243.5 219V222M244.5 219V222M245.5 222V229M246.5 229V242M247.5 242V258M248.5 258V277M249.5 277V298M250.5 298V319M251.5 319V340M252.5 340V360M253.5 360V376M254.5 376V389M255.5 389V397M256.5 397V400M257.5 399V401M258.5 394V400M259.5 386V395M260.5 375V387M261.5 361V376M262.5 346V362M263.5 329V347M264.5 312V330M265.5 295V313M266.5 279V296M267.5 265V280M268.5 253V266M269.5 243V254M270.5 237V244M271.5 233V238M272.5 233V234M273.5 234V238M274.5 238V246M275.5 246V258M276.5 258V272M277.5 272V287M278.5 287V305M279.5 305V322M280.5 322V339M281.5 339V354M282.5 354V367M283.5 367V377M284.5 377V384M285.5 384V386M286.5 385V387M287.5 381V386M288.5 373V382M289.5 363V374M290.5 350V364M291.5 336V351M292.5 321V337M293.5 305V322M294.5 290V306M295.5 276V291M296.5 264V277M297.5 254V265M298.5 248V255M299.5 244V249M300.5 244V245M301.5 244V248M302.5 248V254M303.5 254V262M304.5 262V273M305.5 273V286M306.5 286V300M307.5 300V314M308.5 314V329M309.5 329V342M310.5 342V354M311.5 354V363M312.5 363V371M313.5 371V375M314.5 375V376M315.5 374V377M316.5 370V375M317.5 362V371M318.5 353V363M319.5 341V354M320.5 328V342M321.5 315V329M322.5 301V316M323.5 288V302M324.5 277V289M325.5 267V278M326.5 259V268M327.5 254V260M328.5 252V255M329.5 252V253M330.5 253V257M331.5 257V264M332.5 264V273M333.5 273V284M334.5 284V297M335.5 297V310M336.5 310V324M337.5 324V337M338.5 337V348M339.5 348V358M340.5 358V365M341.5 365V370M342.5 370V371M343.5 370V372M344.5 366V371M345.5 360V367M346.5 352V361M347.5 342V353M348.5 331V343M349.5 319V332M350.5 307V320M351.5 296V308M352.5 286V297M353.5 277V287M354.5 270V278M355.5 265V271M356.5 263V266M357.5 263V264M358.5 263V267M359.5 267V274M360.5 274V285M361.5 285V298M362.5 298V314M363.5 314V332M364.5 332V353M365.5 353V374M366.5 374V396M367.5 396V419M368.5 419V441M369.5 441V462M370.5 462V483M371.5 483V501M372.5 501V517M373.5 517V530M374.5 530V541M375.5 541V548M376.5 548V552M377.5 552V553M378.5 547V553M379.5 538V548M380.5 524V539M381.5 506V525M382.5 485V507M383.5 462V486M384.5 438V463M385.5 414V439M386.5 392V415M387.5 371V393M388.5 354V372M389.5 341V355M390.5 332V342M391.5 329V333M392.5 328V330M393.5 330V337M394.5 337V348M395.5 348V363M396.5 363V382M397.5 382V403M398.5 403V425M399.5 425V448M400.5 448V470M401.5 470V490M402.5 490V507M403.5 507V520M404.5 520V529M405.5 529V533M406.5 532V534M407.5 527V533M408.5 517V528M409.5 503V518M410.5 486V504M411.5 467V487M412.5 446V468M413.5 425V447M414.5 404V426M415.5 385V405M416.5 369V386M417.5 356V370M418.5 348V357M419.5 343V349M420.5 343V344M421.5 344V348M422.5 348V357M423.5 357V368M424.5 368V383M425.5 383V400M426.5 400V418M427.5 418V437M428.5 437V456M429.5 456V473M430.5 473V489M431.5 489V502M432.5 502V512M433.5 512V518M434.5 518V520M435.5 518V521M436.5 511V519M437.5 501V512M438.5 488V502M439.5 472V489M440.5 454V473M441.5 435V455M442.5 416V436M443.5 399V417M444.5 383V400M445.5 370V384M446.5 360V371M447.5 354V361M448.5 353V355M449.5 353V356M450.5 356V364M451.5 364V376M452.5 376V391M453.5 391V406M454.5 406V419M455.5 419V428M456.5 428V433M457.5 433V434M458.5 427V434M459.5 416V428M460.5 401V417M461.5 382V402M462.5 360V383M463.5 336V361M464.5 311V337M465.5 286V312M466.5 263V287M467.5 242V264M468.5 225V243M469.5 212V226M470.5 203V213M471.5 200V204M472.5 200V202M473.5 202V210M474.5 210V222M475.5 222V239M476.5 239V259M477.5 259V282M478.5 282V306M479.5 306V331M480.5 331V354M481.5 354V375M482.5 375V393M483.5 393V407M484.5 407V416M485.5 416V420M486.5 418V421M487.5 412V419M488.5 401V413M489.5 386V402M490.5 368V387M491.5 347V369M492.5 325V348M493.5 303V326M494.5 281V304M495.5 261V282M496.5 244V262M497.5 230V245M498.5 220V231M499.5 215V221M500.5 215V216M501.5 215V220M502.5 220V230M503.5 230V243M504.5 243V261M505.5 261V280M506.5 280V302M507.5 302V323M508.5 323V344M509.5 344V363M510.5 363V380M511.5 380V393M512.5 393V402M513.5 402V405M514.5 405V406M515.5 400V406M516.5 391V401M517.5 379V392M518.5 364V380M519.5 347V365M520.5 329V348M521.5 309V330M522.5 291V310M523.5 273V292M524.5 258V274M525.5 245V259M526.5 236V246M527.5 230V237M528.5 229V231M529.5 229V231M530.5 231V238M531.5 238V248M532.5 248V262M533.5 262V279M534.5 279V297M535.5 297V316M536.5 316V335M537.5 335V352M538.5 352V368M539.5 368V380M540.5 380V389M541.5 389V394M542.5 394V395M543.5 392V396M544.5 386V393M545.5 376V387M546.5 363V377M547.5 348V364M548.5 332V349M549.5 315V333M550.5 298V316M551.5 283V299M552.5 269V284M553.5 258V270M554.5 249V259M555.5 244V250M556.5 243V245M557.5 243V246M558.5 246V251M559.5 251V260M560.5 260V271M561.5 271V284M562.5 284V298M563.5 298V313M564.5 313V329M565.5 329V343M566.5 343V357M567.5 357V368M568.5 368V377M569.5 377V383M570.5 383V386M571.5 386V387M572.5 382V387M573.5 375V383M574.5 365V376M575.5 353V366M576.5 339V354M577.5 324V340M578.5 309V325M579.5 294V310M580.5 281V295M581.5 269V282M582.5 260V270M583.5 255V261M584.5 252V256M585.5 252V253M586.5 253V257M587.5 257V263M588.5 263V272M589.5 272V283M590.5 283V296M591.5 296V309M592.5 309V323M593.5 323V336M594.5 336V349M595.5 349V360M596.5 360V369M597.5 369V376M598.5 376V380M599.5 380V381M600.5 379V382M601.5 374V380M602.5 367V375M603.5 357V368M604.5 345V358M605.5 332V346M606.5 318V333M607.5 305V319M608.5 293V306M609.5 282V294M610.5 273V283M611.5 266V274M612.5 263V267M613.5 263V264M614.5 263V265M615.5 265V271M616.5 271V279M617.5 279V289M618.5 289V300M619.5 300V312M620.5 312V325M621.5 325V337M622.5 337V348M623.5 348V358M624.5 358V365M625.5 365V369M626.5 369V371M627.5 370V372M628.5 367V371M629.5 362V368M630.5 355V363M631.5 347V356M632.5 337V348M633.5 327V338M634.5 316V328M635.5 306V317M636.5 297V307M637.5 288V298M638.5 281V289M639.5 276V282M640.5 272V277M641.5 271V273M642.5 271V273M643.5 273V276M644.5 276V282M645.5 282V290M646.5 290V299M647.5 299V309M648.5 309V320M649.5 320V331M650.5 331V341M651.5 341V350M652.5 350V357M653.5 357V362M654.5 362V366M655.5 366V367M656.5 365V367M657.5 362V366M658.5 356V363M659.5 350V357M660.5 342V351M661.5 333V343M662.5 324V334M663.5 315V325M664.5 306V316M665.5 298V307M666.5 291V299M667.5 286V292M668.5 283V287M669.5 282V284M670.5 282V283M671.5 282V285M672.5 285V290M673.5 290V296M674.5 296V304M675.5 304V313M676.5 313V322M677.5 322V331M678.5 331V340M679.5 340V348M680.5 348V354M681.5 354V359M682.5 359V361M683.5 361V362M684.5 360V363M685.5 356V361M686.5 350V357M687.5 344V351M688.5 337V345M689.5 332V338M690.5 327V333M691.5 325V328M692.5 325V326M693.5 325V332M694.5 332V344M695.5 344V361M696.5 361V382M697.5 382V407M698.5 407V433M699.5 433V460M700.5 460V485M701.5 485V508M702.5 508V527M703.5 527V541M704.5 541V550M705.5 550V552M706.5 549V553M707.5 541V550M708.5 528V542M709.5 511V529M710.5 491V512M711.5 468V492M712.5 444V469M713.5 421V445M714.5 398V422M715.5 378V399M716.5 362V379M717.5 349V363M718.5 341V350M719.5 339V342M720.5 339V341M721.5 341V348M722.5 348V360M723.5 360V376M724.5 376V395M725.5 395V416M726.5 416V438M727.5 438V460M728.5 460V481M729.5 481V500M730.5 500V516M731.5 516V528M732.5 528V536M733.5 536V539M734.5 537V540M735.5 531V538M736.5 521V532M737.5 508V522M738.5 492V509M739.5 473V493M740.5 454V474M741.5 434V455M742.5 414V435M743.5 396V415M744.5 380V397M745.5 368V381M746.5 359V369M747.5 354V360M748.5 353V355M749.5 353V356M750.5 356V364M751.5 364V376M752.5 376V391M753.5 391V409M754.5 409V428M755.5 428V447M756.5 447V467M757.5 467V484M758.5 484V500M759.5 500V512M760.5 512V520M761.5 520V524M762.5 524V525M763.5 520V525M764.5 512V521M765.5 502V513M766.5 489V503M767.5 474V490M768.5 457V475M769.5 440V458M770.5 424V441M771.5 408V425M772.5 394V409M773.5 382V395M774.5 374V383M775.5 368V375M776.5 366V369M777.5 366V368M778.5 368V374M779.5 374V382M780.5 382V394M781.5 394V408M782.5 408V423M783.5 423V440M784.5 440V456M785.5 456V472M786.5 472V486M787.5 486V498M788.5 498V507M789.5 507V512M790.5 512V514M791.5 513V515M792.5 509V514M793.5 502V510M794.5 492V503M795.5 480V493M796.5 466V481M797.5 452V467M798.5 437V453M799.5 422V438M800.5 409V423M801.5 397V410M802.5 388V398M803.5 381V389M804.5 377V382M805.5 377V378M806.5 377V381M807.5 381V390M808.5 390V403M809.5 403V418M810.5 418V433M811.5 433V447M812.5 447V457M813.5 457V462M814.5 462V464M815.5 455V463M816.5 443V456M817.5 425V444M818.5 402V426M819.5 376V403M820.5 347V377M821.5 318V348M822.5 288V319M823.5 261V289M824.5 237V262M825.5 217V238M826.5 202V218M827.5 193V203M828.5 190V194M829.5 190V194M830.5 194V204M831.5 204V220M832.5 220V240M833.5 240V265M834.5 265V292M835.5 292V320M836.5 320V348M837.5 348V374M838.5 374V398M839.5 398V418M840.5 418V432M841.5 432V441M842.5 441V443M843.5 440V444M844.5 431V441M845.5 418V432M846.5 400V419M847.5 378V401M848.5 354V379M849.5 329V355M850.5 304V330M851.5 279V305M852.5 257V280M853.5 239V258M854.5 224V240M855.5 214V225M856.5 210V215M857.5 210V211M858.5 211V217M859.5 217V229M860.5 229V245M861.5 245V264M862.5 264V287M863.5 287V311M864.5 311V335M865.5 335V359M866.5 359V380M867.5 380V399M868.5 399V414M869.5 414V424M870.5 424V428M871.5 428V429M872.5 422V429M873.5 412V423M874.5 397V413M875.5 379V398M876.5 358V380M877.5 336V359M878.5 313V337M879.5 291V314M880.5 270V292M881.5 253V271M882.5 239V254M883.5 229V240M884.5 225V230M885.5 224V226M886.5 225V231M887.5 231V241M888.5 241V255M889.5 255V272M890.5 272V292M891.5 292V313M892.5 313V335M893.5 335V356M894.5 356V374M895.5 374V391M896.5 391V403M897.5 403V411M898.5 411V415M899.5 414V416M900.5 409V415M901.5 400V410M902.5 388V401M903.5 373V389M904.5 357V374M905.5 339V358M906.5 320V340M907.5 302V321M908.5 285V303M909.5 270V286M910.5 257V271M911.5 247V258M912.5 241V248M913.5 239V242M914.5 239V241M915.5 241V247M916.5 247V257M917.5 257V271M918.5 271V288M919.5 288V306M920.5 306V325M921.5 325V344M922.5 344V362M923.5 362V377M924.5 377V389M925.5 389V397M926.5 397V400M927.5 400V401M928.5 396V401M929.5 389V397M930.5 379V390M931.5 367V380M932.5 354V368M933.5 339V355M934.5 323V340M935.5 308V324M936.5 293V309M937.5 280V294M938.5 269V281M939.5 261V270M940.5 255V262M941.5 252V256M942.5 252V253M943.5 253V258M944.5 258V265M945.5 265V276M946.5 276V290M947.5 290V305M948.5 305V321M949.5 321V337M950.5 337V352M951.5 352V365M952.5 365V376M953.5 376V385M954.5 385V389M955.5 389V390M956.5 388V391M957.5 384V389M958.5 376V385M959.5 367V377M960.5 355V368M961.5 343V356M962.5 329V344M963.5 316V330M964.5 303V317M965.5 291V304M966.5 280V292M967.5 272V281M968.5 266V273M969.5 263V267M970.5 263V264M971.5 263V266M972.5 266V271M973.5 271V280M974.5 280V291M975.5 291V303M976.5 303V317M977.5 317V331M978.5 331V344M979.5 344V357M980.5 357V368M981.5 368V377M982.5 377V383M983.5 383V386M984.5 386V387M985.5 383V387M986.5 378V384M987.5 371V379M988.5 362V372M989.5 351V363M990.5 339V352M991.5 327V340M992.5 315V328M993.5 303V316M994.5 293V304M995.5 284V294M996.5 278V285M997.5 273V279M998.5 271V274M999.5 271V272M1000.5 272V276M1001.5 276V281M1002.5 281V289M1003.5 289V299M1004.5 299V310M1005.5 310V322M1006.5 322V333M1007.5 333V345M1008.5 345V355M1009.5 355V364M1010.5 364V370M1011.5 370V375M1012.5 375V377M1013.5 376V378M1014.5 372V377M1015.5 366V373M1016.5 357V367M1017.5 347V358M1018.5 336V348M1019.5 325V337M1020.5 315V326M1021.5 305V316M1022.5 298V306M1023.5 293V299M1024.5 290V294M1025.5 290V292M1026.5 292V303M1027.5 303V322M1028.5 322V348M1029.5 348V380M1030.5 380V415M1031.5 415V452M1032.5 452V489M1033.5 489V524M1034.5 524V554M1035.5 554V578M1036.5 578V583M1040.5 581V583M1041.5 563V582M1042.5 539V564M1043.5 512V540M1044.5 482V513M1045.5 452V483M1046.5 421V453M1047.5 392V422M1048.5 366V393M1049.5 344V367M1050.5 326V345M1051.5 315V327M1052.5 310V316M1053.5 309V311M1054.5 311V320M1055.5 320V336M1056.5 336V358M1057.5 358V385M1058.5 385V415M1059.5 415V446M1060.5 446V478M1061.5 478V507M1062.5 507V533M1063.5 533V554M1064.5 554V568M1065.5 568V576M1066.5 576V578M1067.5 571V577M1068.5 560V572M1069.5 545V561M1070.5 526V546M1071.5 503V527M1072.5 478V504M1073.5 453V479M1074.5 427V454M1075.5 402V428M1076.5 380V403M1077.5 360V381M1078.5 345V361M1079.5 334V346M1080.5 329V335M1081.5 328V330M1082.5 329V335M1083.5 335V347M1084.5 347V363M1085.5 363V384M1086.5 384V408M1087.5 408V434M1088.5 434V460M1089.5 460V485M1090.5 485V509M1091.5 509V528M1092.5 528V544M1093.5 544V553M1094.5 553V558M1095.5 556V559M1096.5 550V557M1097.5 539V551M1098.5 524V540M1099.5 505V525M1100.5 484V506M1101.5 462V485M1102.5 439V463M1103.5 417V440M1104.5 396V418M1105.5 378V397M1106.5 364V379M1107.5 354V365M1108.5 348V355M1109.5 348V349M1110.5 348V352M1111.5 352V362M1112.5 362V375M1113.5 375V393M1114.5 393V413M1115.5 413V434M1116.5 434V457M1117.5 457V478M1118.5 478V498M1119.5 498V516M1120.5 516V529M1121.5 529V539M1122.5 539V543M1123.5 543V544M1124.5 538V544M1125.5 528V539M1126.5 515V529M1127.5 499V516M1128.5 480V500M1129.5 459V481M1130.5 439V460M1131.5 418V440M1132.5 400V419M1133.5 384V401M1134.5 371V385M1135.5 363V372M1136.5 359V364M1137.5 358V360M1138.5 356V359M1139.5 351V357M1140.5 345V352M1141.5 338V346M1142.5 329V339M1143.5 321V330M1144.5 312V322M1145.5 304V313M1146.5 297V305M1147.5 291V298M1148.5 287V292M1149.5 286V288M1150.5 286V287M1151.5 286V288M1152.5 288V292M1153.5 292V297M1154.5 297V304M1155.5 304V311M1156.5 311V319M1157.5 319V328M1158.5 328V336M1159.5 336V343M1160.5 343V350M1161.5 350V355M1162.5 355V359M1163.5 359V361M1164.5 361V362M1165.5 360V362M1166.5 356V361M1167.5 352V357M1168.5 346V353M1169.5 338V347M1170.5 331V339M1171.5 323V332M1172.5 315V324M1173.5 307V316M1174.5 301V308M1175.5 296V302M1176.5 292V297M1177.5 291V293M1178.5 290V292M1179.5 291V292M1180.5 292V295M1181.5 295V300M1182.5 300V306M1183.5 306V313M1184.5 313V320M1185.5 320V328M1186.5 328V335M1187.5 335V342M1188.5 342V348M1189.5 348V352M1190.5 352V356M1191.5 356V357M1192.5 357V358M1193.5 356V358M1194.5 354V357M1195.5 350V355M1196.5 346V351M1197.5 341V347M1198.5 336V342M1199.5 330V337M1200.5 324V331M1201.5 318V325M1202.5 313V319M1203.5 309V314M1204.5 305V310M1205.5 302V306M1206.5 301V303M1207.5 300V302M1208.5 300V301M1209.5 301V303M1210.5 303V307M1211.5 307V311M1212.5 311V316M1213.5 316V322M1214.5 322V328M1215.5 328V333M1216.5 333V339M1217.5 339V344M1218.5 344V348M1219.5 348V350M1220.5 350V352M1221.5 352V353M1222.5 352V353M1223.5 350V353M1224.5 347V351M1225.5 343V348M1226.5 338V344M1227.5 333V339M1228.5 327V334M1229.5 322V328M1230.5 317V323M1231.5 313V318M1232.5 310V314M1233.5 307V311M1234.5 306V308M1235.5 306V307M1236.5 306V307M1237.5 307V309M1238.5 309V312M1239.5 312V315M1240.5 315V320M1241.5 320V325M1242.5 325V330M1243.5 330V335M1244.5 335V339M1245.5 339V344M1246.5 344V347M1247.5 347V350M1248.5 350V352M1249.5 352V353M1250.5 352V353M1251.5 351V353M1252.5 348V352M1253.5 345V349M1254.5 341V346M1255.5 336V342M1256.5 331V337M1257.5 327V332M1258.5 322V328M1259.5 318V323M1260.5 314V319M1261.5 312V315M1262.5 310V313M1263.5 309V311M1264.5 309V310M1265.5 310V311M1266.5 311V314M1267.5 314V317M1268.5 317V321M1269.5 321V325M1270.5 325V330M1271.5 330V334M1272.5 334V338M1273.5 338V342M1274.5 342V344M1275.5 344V346M1276.5 346V347M1277.5 347V348M1278.5 347V348M1279.5 345V348M1280.5 342V346M1281.5 339V343M1282.5 336V340M1283.5 332V337M1284.5 328V333M1285.5 324V329M1286.5 320V325M1287.5 317V321M1288.5 314V318M1289.5 311V315M1290.5 310V312M1291.5 309V311M1292.5 309V312M1293.5 312V322M1294.5 322V340M1295.5 340V364M1296.5 364V393M1297.5 393V426M1298.5 426V460M1299.5 460V494M1300.5 494V525M1301.5 525V553M1302.5 553V575M1303.5 575V583M1306.5 580V583M1307.5 564V581M1308.5 546V565M1309.5 527V547M1310.5 506V528M1311.5 484V507M1312.5 460V485M1313.5 436V461M1314.5 412V437M1315.5 387V413M1316.5 387V388" stroke="#ffff00" stroke-width="1" fill="none"/>
<path d="M677 127h13v14l-6.5 3.5l-6.5-3.5z" fill="#ffff00" shape-rendering="auto"/>
<path d="M679 129.5h8M683.5 129v13" stroke="#2b3030" stroke-width="1" fill="none"/>
<path d="M1320 367.5l3-5q1-1.5 2-1.5h12v13H1325q-1 0-2-1.5z" fill="#ffff00" shape-rendering="auto"/>
<path d="M1322 367.5h12.5M1334.5 363v9" stroke="#2b3030" stroke-width="1" fill="none"/>
<path d="M16 311h25l8 8.5l-8 8.5h-25z" fill="#00ffff" shape-rendering="auto"/>
<path d="M16 371h25l8 8.5l-8 8.5h-25z" fill="#ffff00" shape-rendering="auto"/>
<text x="17" y="322.6" fill="#2b3030" font-size="11" font-family='"Liberation Serif","Times New Roman",serif' textLength="20.5" lengthAdjust="spacingAndGlyphs" xml:space="preserve">CH2</text>
<text x="17" y="382.6" fill="#2b3030" font-size="11" font-family='"Liberation Serif","Times New Roman",serif' textLength="20.5" lengthAdjust="spacingAndGlyphs" xml:space="preserve">CH1</text>
<text x="9.5" y="65" fill="#ffff00" font-size="14" font-family='"Liberation Serif","Times New Roman",serif' textLength="24.0" lengthAdjust="spacingAndGlyphs" xml:space="preserve">Run</text>
<text x="1355.8" y="65" fill="#ffff00" font-size="14" font-family='"Liberation Serif","Times New Roman",serif' text-anchor="end" textLength="86.0" lengthAdjust="spacingAndGlyphs" xml:space="preserve">CH1  6.000 mV</text>
<text x="12.2" y="613" fill="#ffff00" font-size="14" font-family='"Liberation Serif","Times New Roman",serif' textLength="23.5" lengthAdjust="spacingAndGlyphs" xml:space="preserve">CH1</text>
<text x="123.5" y="613" fill="#ffff00" font-size="14" font-family='"Liberation Serif","Times New Roman",serif' text-anchor="end" textLength="43.5" lengthAdjust="spacingAndGlyphs" xml:space="preserve">X1  DC</text>
<text x="123.5" y="629" fill="#ffff00" font-size="14" font-family='"Liberation Serif","Times New Roman",serif' text-anchor="end" textLength="57.5" lengthAdjust="spacingAndGlyphs" xml:space="preserve">20 mV/div</text>
<text x="123.5" y="645" fill="#ffff00" font-size="14" font-family='"Liberation Serif","Times New Roman",serif' text-anchor="end" textLength="53.0" lengthAdjust="spacingAndGlyphs" xml:space="preserve">-7.27 mV</text>
<text x="137.5" y="613" fill="#00ffff" font-size="14" font-family='"Liberation Serif","Times New Roman",serif' textLength="23.5" lengthAdjust="spacingAndGlyphs" xml:space="preserve">CH2</text>
<text x="248.5" y="629" fill="#00ffff" font-size="14" font-family='"Liberation Serif","Times New Roman",serif' text-anchor="end" textLength="57.5" lengthAdjust="spacingAndGlyphs" xml:space="preserve">20 mV/div</text>
<text x="248.5" y="645" fill="#00ffff" font-size="14" font-family='"Liberation Serif","Times New Roman",serif' text-anchor="end" textLength="54.5" lengthAdjust="spacingAndGlyphs" xml:space="preserve">20.00 mV</text>
<text x="1242" y="613" fill="#ffff00" font-size="14" font-family='"Liberation Serif","Times New Roman",serif' textLength="28.5" lengthAdjust="spacingAndGlyphs" xml:space="preserve">Time</text>
<text x="1353" y="629" fill="#ffff00" font-size="14" font-family='"Liberation Serif","Times New Roman",serif' text-anchor="end" textLength="50.8" lengthAdjust="spacingAndGlyphs" xml:space="preserve">10 us/div</text>
<text x="1242" y="645" fill="#ffff00" font-size="14" font-family='"Liberation Serif","Times New Roman",serif' textLength="25.5" lengthAdjust="spacingAndGlyphs" xml:space="preserve">1MB</text>
<text x="1353" y="645" fill="#ffff00" font-size="14" font-family='"Liberation Serif","Times New Roman",serif' text-anchor="end" textLength="46.3" lengthAdjust="spacingAndGlyphs" xml:space="preserve">8 MSa/s</text>
<text x="12" y="677" fill="#ffff00" font-size="14" font-family='"Liberation Serif","Times New Roman",serif' xml:space="preserve">Vmin= -71.026 mV</text>
<text x="156" y="677" fill="#ffff00" font-size="14" font-family='"Liberation Serif","Times New Roman",serif' xml:space="preserve">Vmax= 65.913 mV</text>
<text x="300" y="677" fill="#ffff00" font-size="14" font-family='"Liberation Serif","Times New Roman",serif' xml:space="preserve">Vpp= 136.938 mV</text>
<text x="444" y="677" fill="#ffff00" font-size="14" font-family='"Liberation Serif","Times New Roman",serif' xml:space="preserve">Vrms= 40.593 mV</text>
<text x="588" y="677" fill="#ffff00" font-size="14" font-family='"Liberation Serif","Times New Roman",serif' xml:space="preserve">Vmean= -1.701 mV</text>
<text x="732" y="677" fill="#ffff00" font-size="14" font-family='"Liberation Serif","Times New Roman",serif' xml:space="preserve">Vsdev= 40.558 mV</text>
<text x="876" y="677" fill="#ffff00" font-size="14" font-family='"Liberation Serif","Times New Roman",serif' xml:space="preserve">Vbase= -72.934 mV</text>
<text x="1020" y="677" fill="#ffff00" font-size="14" font-family='"Liberation Serif","Times New Roman",serif' xml:space="preserve">Vtop= 68.757 mV</text>
<text x="1164" y="677" fill="#ffff00" font-size="14" font-family='"Liberation Serif","Times New Roman",serif' xml:space="preserve">Vampl= 141.691 mV</text>
<text x="12" y="693" fill="#ffff00" font-size="14" font-family='"Liberation Serif","Times New Roman",serif' xml:space="preserve">Vcmean= -1.702 mV</text>
<text x="156" y="693" fill="#ffff00" font-size="14" font-family='"Liberation Serif","Times New Roman",serif' xml:space="preserve">Vcrms= 40.594 mV</text>
<text x="300" y="693" fill="#ffff00" font-size="14" font-family='"Liberation Serif","Times New Roman",serif' xml:space="preserve">Vcsdev= 40.558 mV</text>
<text x="444" y="693" fill="#ffff00" font-size="14" font-family='"Liberation Serif","Times New Roman",serif' xml:space="preserve">F= 63.492 KHz</text>
<text x="588" y="693" fill="#ffff00" font-size="14" font-family='"Liberation Serif","Times New Roman",serif' xml:space="preserve">Cycle 15.750 us</text>
<text x="732" y="693" fill="#ffff00" font-size="14" font-family='"Liberation Serif","Times New Roman",serif' xml:space="preserve">P= 220</text>
<text x="876" y="693" fill="#ffff00" font-size="14" font-family='"Liberation Serif","Times New Roman",serif' xml:space="preserve">Duty(-)= ****</text>
<text x="1020" y="693" fill="#ffff00" font-size="14" font-family='"Liberation Serif","Times New Roman",serif' xml:space="preserve">Duty(+)= ****</text>
<text x="1164" y="693" fill="#ffff00" font-size="14" font-family='"Liberation Serif","Times New Roman",serif' xml:space="preserve">Pulse(-)= ****</text>
<text x="12" y="709" fill="#ffff00" font-size="14" font-family='"Liberation Serif","Times New Roman",serif' xml:space="preserve">Pulse(+)= ****</text>
<text x="12" y="725" fill="#00ffff" font-size="14" font-family='"Liberation Serif","Times New Roman",serif' xml:space="preserve">Vmin= ****</text>
<text x="156" y="725" fill="#00ffff" font-size="14" font-family='"Liberation Serif","Times New Roman",serif' xml:space="preserve">Vmax= ****</text>
<text x="300" y="725" fill="#00ffff" font-size="14" font-family='"Liberation Serif","Times New Roman",serif' xml:space="preserve">Vpp= ****</text>
<text x="444" y="725" fill="#00ffff" font-size="14" font-family='"Liberation Serif","Times New Roman",serif' xml:space="preserve">Vrms= ****</text>
<text x="588" y="725" fill="#00ffff" font-size="14" font-family='"Liberation Serif","Times New Roman",serif' xml:space="preserve">Vmean= ****</text>
<text x="732" y="725" fill="#00ffff" font-size="14" font-family='"Liberation Serif","Times New Roman",serif' xml:space="preserve">Vsdev= ****</text>
<text x="876" y="725" fill="#00ffff" font-size="14" font-family='"Liberation Serif","Times New Roman",serif' xml:space="preserve">Vbase= ****</text>
<text x="1020" y="725" fill="#00ffff" font-size="14" font-family='"Liberation Serif","Times New Roman",serif' xml:space="preserve">Vtop= ****</text>
<text x="1164" y="725" fill="#00ffff" font-size="14" font-family='"Liberation Serif","Times New Roman",serif' xml:space="preserve">Vampl= ****</text>
<text x="12" y="741" fill="#00ffff" font-size="14" font-family='"Liberation Serif","Times New Roman",serif' xml:space="preserve">Vcmean= ****</text>
<text x="156" y="741" fill="#00ffff" font-size="14" font-family='"Liberation Serif","Times New Roman",serif' xml:space="preserve">Vcrms= ****</text>
<text x="300" y="741" fill="#00ffff" font-size="14" font-family='"Liberation Serif","Times New Roman",serif' xml:space="preserve">Vcsdev= ****</text>
<text x="444" y="741" fill="#00ffff" font-size="14" font-family='"Liberation Serif","Times New Roman",serif' xml:space="preserve">F= 0.000 Hz</text>
<text x="588" y="741" fill="#00ffff" font-size="14" font-family='"Liberation Serif","Times New Roman",serif' xml:space="preserve">Cycle 0.000 ns</text>
<text x="732" y="741" fill="#00ffff" font-size="14" font-family='"Liberation Serif","Times New Roman",serif' xml:space="preserve">P= 0</text>
<text x="876" y="741" fill="#00ffff" font-size="14" font-family='"Liberation Serif","Times New Roman",serif' xml:space="preserve">Duty(-)= ****</text>
<text x="1020" y="741" fill="#00ffff" font-size="14" font-family='"Liberation Serif","Times New Roman",serif' xml:space="preserve">Duty(+)= ****</text>
<text x="1164" y="741" fill="#00ffff" font-size="14" font-family='"Liberation Serif","Times New Roman",serif' xml:space="preserve">Pulse(-)= ****</text>
<text x="12" y="757" fill="#00ffff" font-size="14" font-family='"Liberation Serif","Times New Roman",serif' xml:space="preserve">Pulse(+)= ****</text>
</svg>
<div id="edgeL" class="abs"></div><div id="edgeR" class="abs"></div><div id="edgeB" class="abs"></div>
<div id="popup" class="abs"><b  style="transform:scaleX(0.9285)">Full Screen</b><div id="popsep"></div><div id="poplow"></div><div id="popbtn"><span  style="transform:scaleX(0.9853)">Close Full Screen</span></div></div>
<div id="tool" class="abs"><div id="tooltitle"><span  style="transform:scaleX(0.9953)">Multi VirAnalyzer(3.10.6.1)</span></div>
<div id="sel"></div>
<div class="cap" style="left:239px"></div><div class="cap" style="left:255px"></div>
<svg class="abs" style="left:0;top:0" width="273" height="65" viewBox="1007 11 273 65">
<defs><linearGradient id="gb" x1="0" y1="0" x2="0" y2="1"><stop offset="0" stop-color="#5f5f5f"/><stop offset=".45" stop-color="#2a2a2a"/><stop offset=".8" stop-color="#050505"/><stop offset="1" stop-color="#000"/></linearGradient><radialGradient id="gh" cx=".25" cy=".1" r=".8"><stop offset="0" stop-color="#fff" stop-opacity=".25"/><stop offset="1" stop-color="#fff" stop-opacity="0"/></radialGradient></defs>
<rect x="1011" y="14" width="16" height="16" rx="1" fill="url(#gb)"/>
<path d="M1012.2 19.6l1.6 4.4 1.5-3.4 1.5 3.4 1.5-4.6" fill="none" stroke="#fff" stroke-width="1.4" stroke-linecap="round" stroke-linejoin="round"/>
<path d="M1019.5 14.8L1025.6 29" fill="none" stroke="#fff" stroke-width="2" stroke-dasharray="1.3 .9"/>
<path d="M1021.6 14.6L1024 19.4M1017.8 19L1022 29" fill="none" stroke="#fff" stroke-width="1.3" stroke-dasharray="1 1.2"/>
<path d="M1249 21h9.2l-4.6 5z" fill="#4a4a4a"/>
<path d="M1265.5 19.3l7.5 6.6M1273 19.3l-7.5 6.6" stroke="#4a4a4a" stroke-width="1.5" fill="none"/>
<rect x="1009.5" y="38.5" width="32.5" height="33" rx="3" fill="none" stroke="#fff" stroke-opacity=".55"/><rect x="1010" y="39" width="31.5" height="32" rx="2.5" fill="url(#gb)"/><rect x="1010" y="39" width="31.5" height="32" rx="2.5" fill="url(#gh)"/>
<rect x="1049.5" y="38.5" width="32.5" height="33" rx="3" fill="none" stroke="#fff" stroke-opacity=".55"/><rect x="1050" y="39" width="31.5" height="32" rx="2.5" fill="url(#gb)"/><rect x="1050" y="39" width="31.5" height="32" rx="2.5" fill="url(#gh)"/>
<rect x="1088.5" y="38.5" width="32.5" height="33" rx="3" fill="none" stroke="#fff" stroke-opacity=".55"/><rect x="1089" y="39" width="31.5" height="32" rx="2.5" fill="url(#gb)"/><rect x="1089" y="39" width="31.5" height="32" rx="2.5" fill="url(#gh)"/>
<rect x="1127.5" y="38.5" width="32.5" height="33" rx="3" fill="none" stroke="#fff" stroke-opacity=".55"/><rect x="1128" y="39" width="31.5" height="32" rx="2.5" fill="url(#gb)"/><rect x="1128" y="39" width="31.5" height="32" rx="2.5" fill="url(#gh)"/>
<rect x="1167.5" y="38.5" width="32.5" height="33" rx="3" fill="none" stroke="#fff" stroke-opacity=".55"/><rect x="1168" y="39" width="31.5" height="32" rx="2.5" fill="url(#gb)"/><rect x="1168" y="39" width="31.5" height="32" rx="2.5" fill="url(#gh)"/>
<rect x="1207.5" y="38.5" width="32.5" height="33" rx="3" fill="none" stroke="#fff" stroke-opacity=".55"/><rect x="1208" y="39" width="31.5" height="32" rx="2.5" fill="url(#gb)"/><rect x="1208" y="39" width="31.5" height="32" rx="2.5" fill="url(#gh)"/>
<rect x="1244.5" y="38.5" width="32.5" height="33" rx="3" fill="none" stroke="#fff" stroke-opacity=".55"/><rect x="1245" y="39" width="31.5" height="32" rx="2.5" fill="url(#gb)"/><rect x="1245" y="39" width="31.5" height="32" rx="2.5" fill="url(#gh)"/>
<g transform="translate(1010 39)"><path d="M3.6 24.6C5 19 7 7.4 9.2 7.4S13 19 15 24.6C16 21 17.4 16.8 18.6 16.8S20.4 21 21.2 23.8C22 21.5 23.2 19 24.2 19S26.4 22 27.2 24.6" fill="none" stroke="#fff" stroke-linecap="round" stroke-linejoin="round" stroke-width="2.8"/><path d="M28.8 3C26 1.8 21.8 3.4 22.4 5.4S28.4 6.4 28 8.6S22.4 11 20.4 9.6" fill="none" stroke="#fff" stroke-linecap="round" stroke-linejoin="round" stroke-width="1.5"/></g>
<g transform="translate(1050 39)"><path d="M3.6 24.6C5 19 7 7.4 9.2 7.4S13 19 15 24.6C16 21 17.4 16.8 18.6 16.8S20.4 21 21.2 23.8C22 21.5 23.2 19 24.2 19S26.4 22 27.2 24.6" fill="none" stroke="#fff" stroke-linecap="round" stroke-linejoin="round" stroke-width="2.8"/><path d="M22.8 3.8C25.4 1.8 29.8 2.2 29.6 4.6S25.6 7.8 23.8 6.6M25.6 3.4L21.8 10.8" fill="none" stroke="#fff" stroke-linecap="round" stroke-linejoin="round" stroke-width="1.4"/></g>
<g transform="translate(1089 39)"><ellipse cx="7.8" cy="16.6" rx="5.1" ry="4.3" fill="#fff" transform="rotate(18 7.8 16.6)"/><path d="M6 20C9 23 13.5 24 16.8 23.4L17.4 19.4L14 15.6C12.6 15.2 12 17 12.4 18z" fill="#fff"/><ellipse cx="15" cy="17.2" rx="2.3" ry="2" fill="#fff"/><path d="M15 18L19.7 24.8C20 18 19.6 8.4 21.4 7.6S25.6 11.5 27.6 15.2" fill="none" stroke="#fff" stroke-linecap="round" stroke-linejoin="round" stroke-width="2.8"/><circle cx="7.7" cy="14.7" r=".85" fill="#2a2a2a"/><circle cx="5.6" cy="16.9" r=".85" fill="#2a2a2a"/><circle cx="9.9" cy="16.9" r=".85" fill="#2a2a2a"/><circle cx="7.9" cy="19.2" r=".85" fill="#2a2a2a"/></g>
<g transform="translate(1128 39)"><path d="M4.8 21.6H9.8V15H14V21.6H17V8.4H22.8V21.6H27.4" fill="none" stroke="#fff" stroke-linecap="round" stroke-linejoin="round" stroke-width="2.6"/></g>
<g transform="translate(1168 39)"><ellipse cx="7.6" cy="17" rx="2.2" ry="4" fill="#fff"/><ellipse cx="23.6" cy="17" rx="2.2" ry="4" fill="#fff"/><path d="M8.4 17C9.4 21 10.6 23 11.6 22.4C13.4 21 14 8 15.6 7.8S18 21 19.6 23.2C20.6 24 21.6 19 22.4 14.4" fill="none" stroke="#fff" stroke-linecap="round" stroke-linejoin="round" stroke-width="2.4"/></g>
<g transform="translate(1208 39)"><path d="M3.6 12.6C4 10 4.8 8 5.6 8S6.6 10.4 7.2 10.2C8 9 8.8 5.4 10.2 5.6S14 20 15.8 26.4C16.8 23 18 17.4 19.2 17.4S21.6 23 22.8 25.2C23.4 23.4 24.2 20.8 25.2 20.8S27.4 24.4 28 26.4" fill="none" stroke="#fff" stroke-linecap="round" stroke-linejoin="round" stroke-width="2.7"/></g>
<g transform="translate(1245 39)"><path d="M4 20.4C8 20.2 9.6 18.6 10.6 15.4S11.6 9.2 13.4 9.2H19C20.8 9.2 20.8 12 21.8 15.4S24.4 20.2 28 20.4" fill="none" stroke="#fff" stroke-linecap="round" stroke-linejoin="round" stroke-width="2"/></g>
</svg></div>
</body></html>
